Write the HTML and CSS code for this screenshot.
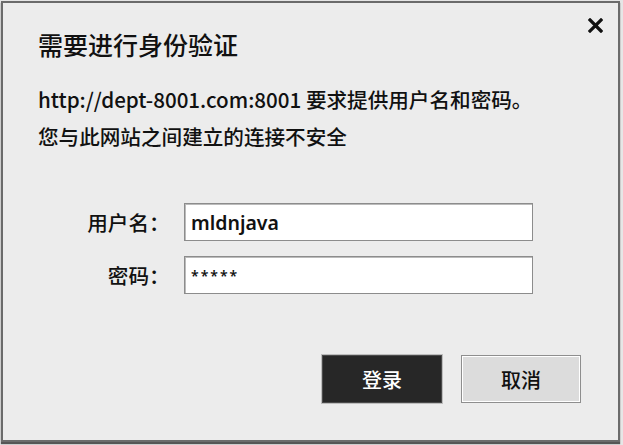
FILE: index.html
```html
<!DOCTYPE html>
<html lang="zh-CN">
<head>
<meta charset="utf-8">
<title>需要进行身份验证</title>
<link rel="stylesheet" href="styles.css">
</head>
<body>
<div class="dialog">
  <button class="close" type="button" aria-label="关闭">
    <svg width="15" height="15" viewBox="0 0 15 15"><path d="M2 2 L13 13 M13 2 L2 13" stroke="#111" stroke-width="3.2" stroke-linecap="square"/></svg>
  </button>
  <h1 class="title">需要进行身份验证</h1>
  <p class="msg msg-first">http://dept-8001.com:8001 要求提供用户名和密码。</p>
  <p class="msg msg-second">您与此网站之间建立的连接不安全</p>
  <div class="form">
    <div class="row">
      <label class="label">用户名<span class="colon">：</span></label>
      <input class="field" type="text" value="mldnjava">
    </div>
    <div class="row">
      <label class="label">密码<span class="colon">：</span></label>
      <input class="field field-pass" type="text" value="*****">
    </div>
  </div>
  <div class="actions">
    <button class="btn btn-primary" type="button">登录</button>
    <button class="btn btn-secondary" type="button">取消</button>
  </div>
</div>
</body>
</html>
```

FILE: styles.css
```css
html, body {
  margin: 0;
  padding: 0;
}
body {
  width: 623px;
  height: 445px;
  background: #e6e6e6;
  overflow: hidden;
  font-family: "Noto Sans CJK SC", "Noto Sans", sans-serif;
  color: #111;
}
.dialog {
  position: relative;
  box-sizing: border-box;
  margin: 1px 0 0 1px;
  width: 619px;
  height: 441px;
  border: 2px solid #6b6b6b;
  background: #ececec;
  box-shadow: 0 2px 1px #555;
  padding: 26px 37px 0 35px;
  display: flex;
  flex-direction: column;
}
.close {
  position: absolute;
  top: 15px;
  right: 15px;
  width: 15px;
  height: 15px;
  padding: 0;
  border: 0;
  background: transparent;
  display: flex;
}
.title {
  margin: 0;
  font-size: 25px;
  line-height: 30px;
  font-weight: 500;
}
.msg {
  margin: 0;
  font-size: 20.6px;
  line-height: 28px;
  font-weight: 500;
}
.msg-first {
  margin-top: 26px;
}
.msg-second {
  margin-top: 9px;
}
.form {
  margin-top: 53px;
  display: flex;
  flex-direction: column;
  gap: 15px;
}
.row {
  display: flex;
  align-items: center;
  gap: 14px;
}
.label {
  width: 132px;
  display: flex;
  justify-content: flex-end;
  font-size: 20.6px;
  line-height: 38px;
  font-weight: 500;
}
.colon {
  width: 20px;
  text-align: right;
  padding-right: 1px;
}
.field {
  box-sizing: border-box;
  width: 349px;
  height: 38px;
  margin: 0;
  border: 1px solid #8c8c8c;
  box-shadow: inset 1px 1px 0 #bbb;
  background: #fff;
  padding: 0 0 0 6px;
  font-family: "Noto Sans", "Noto Sans CJK SC", sans-serif;
  font-size: 19.5px;
  font-weight: 600;
  color: #111;
  outline: none;
}
.field-pass {
  font-size: 14px;
  letter-spacing: 2px;
}
.actions {
  margin-top: 61px;
  display: flex;
  justify-content: flex-end;
  gap: 19px;
}
.btn {
  box-sizing: border-box;
  width: 120px;
  height: 48px;
  margin: 0;
  font-family: "Noto Sans CJK SC", sans-serif;
  font-size: 20px;
  font-weight: 500;
  padding: 0;
}
.btn-primary {
  background: #272727;
  color: #fff;
  border: 1px solid #4a4a4a;
  box-shadow: 0 0 0 1px #bdbdbd;
}
.btn-secondary {
  background: #dcdcdc;
  color: #111;
  border: 1px solid #8e8e8e;
  box-shadow: inset 0 0 0 1px #fff;
}
```
